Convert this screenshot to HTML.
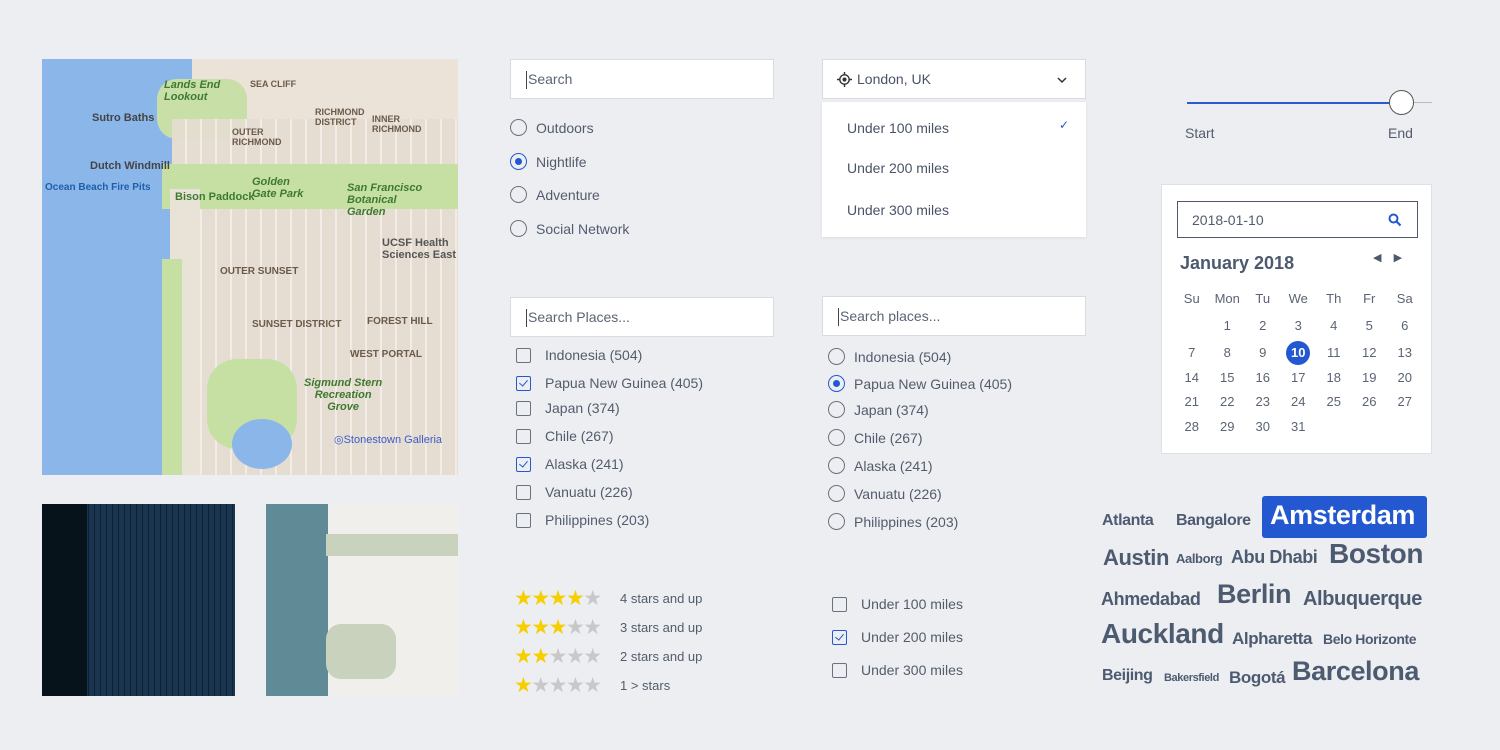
<!DOCTYPE html>
<html><head><style>
*{box-sizing:border-box;margin:0;padding:0}
body{width:1500px;height:750px;background:#edeef2;font-family:"Liberation Sans",sans-serif;color:#525c6c;position:relative;overflow:hidden}
.a{position:absolute}
.inp{position:absolute;background:#fff;border:1px solid #d8dbe0;height:40px;font-size:14px;padding:11px 0 0 14px;color:#5a6474}
.inp:before{content:"";position:absolute;left:15px;top:11px;width:1px;height:18px;background:#444}
.inp span{margin-left:3px}
.row{position:absolute;font-size:14px;display:flex;align-items:center;gap:9px;white-space:nowrap}
.rad{width:17px;height:17px;border:1.5px solid #6a7280;border-radius:50%;position:relative;background:transparent}
.rad.on{border-color:#2358d0}
.rad.on:after{content:"";position:absolute;left:3.5px;top:3.5px;width:7px;height:7px;border-radius:50%;background:#2358d0}
.cb{width:15px;height:15px;border:1.5px solid #6a7280;border-radius:2px;position:relative;margin-right:5px}
.cb.on{border-color:#2358d0}
.cb.on:after{content:"";position:absolute;left:4px;top:1px;width:4px;height:7px;border:solid #2358d0;border-width:0 1.5px 1.5px 0;transform:rotate(40deg)}
.st{font-size:21px;letter-spacing:-1.5px;color:#c8c8c8;width:100px}
.st b{color:#f5cf00;font-weight:normal}
.cal td{width:35.5px;text-align:center;font-size:13px;height:24.5px;color:#5a6474}
.tag{position:absolute;font-weight:bold;color:#4d5b70;white-space:nowrap;letter-spacing:-0.4px}
.m{position:absolute;font-size:9px;color:#6b5a4a;font-weight:bold;white-space:nowrap}
</style></head><body>

<!-- big map -->
<div class="a" style="left:42px;top:59px;width:416px;height:416px;background:#ebe3d8;overflow:hidden">
 <div class="a" style="left:0;top:0;width:130px;height:416px;background:#8ab6ea"></div>
 <div class="a" style="left:0;top:0;width:150px;height:70px;background:#8ab6ea"></div>
 <div class="a" style="left:115px;top:20px;width:90px;height:60px;background:#c8dfa8;border-radius:20px"></div>
 <div class="a" style="left:130px;top:60px;width:300px;height:360px;background:repeating-linear-gradient(90deg,#e6ddd2 0 13px,#f4eee8 13px 15px),#ebe3d8;opacity:.9"></div>
 <div class="a" style="left:120px;top:105px;width:300px;height:45px;background:#c6e0a4"></div>
 <div class="a" style="left:128px;top:130px;width:30px;height:290px;background:#e9e2d6"></div>
 <div class="a" style="left:165px;top:300px;width:90px;height:90px;background:#c6e0a4;border-radius:30px"></div>
 <div class="a" style="left:190px;top:360px;width:60px;height:50px;background:#8ab6ea;border-radius:50%"></div>
 <div class="a" style="left:120px;top:200px;width:20px;height:216px;background:#c6e0a4"></div>
 <div class="m" style="left:122px;top:20px;font-style:italic;font-size:11px;color:#3d7a2f">Lands End<br>Lookout</div>
 <div class="m" style="left:208px;top:20px">SEA CLIFF</div>
 <div class="m" style="left:50px;top:53px;font-size:11px;color:#444">Sutro Baths</div>
 <div class="m" style="left:190px;top:68px">OUTER<br>RICHMOND</div>
 <div class="m" style="left:273px;top:48px">RICHMOND<br>DISTRICT</div>
 <div class="m" style="left:330px;top:55px">INNER<br>RICHMOND</div>
 <div class="m" style="left:48px;top:101px;font-size:11px;color:#444">Dutch Windmill</div>
 <div class="m" style="left:3px;top:123px;font-size:10px;color:#1f5fa8">Ocean Beach Fire Pits</div>
 <div class="m" style="left:133px;top:132px;font-size:11px;color:#3d7a2f">Bison Paddock</div>
 <div class="m" style="left:210px;top:117px;font-size:11px;color:#3d7a2f;font-style:italic">Golden<br>Gate Park</div>
 <div class="m" style="left:305px;top:123px;font-size:11px;color:#3d7a2f;font-style:italic">San Francisco<br>Botanical<br>Garden</div>
 <div class="m" style="left:340px;top:178px;font-size:11px;color:#555">UCSF Health<br>Sciences East</div>
 <div class="m" style="left:178px;top:207px;font-size:10px">OUTER SUNSET</div>
 <div class="m" style="left:210px;top:260px;font-size:10px">SUNSET DISTRICT</div>
 <div class="m" style="left:325px;top:257px;font-size:10px">FOREST HILL</div>
 <div class="m" style="left:308px;top:290px;font-size:10px">WEST PORTAL</div>
 <div class="m" style="left:262px;top:318px;font-size:11px;color:#3d7a2f;font-style:italic;text-align:center">Sigmund Stern<br>Recreation<br>Grove</div>
 <div class="m" style="left:292px;top:374px;font-size:11px;color:#3b5bc9;font-weight:normal">◎Stonestown Galleria</div>
</div>
<!-- dark map -->
<div class="a" style="left:42px;top:504px;width:193px;height:192px;background:#0d1a24;overflow:hidden">
 <div class="a" style="left:35px;top:0;width:160px;height:192px;background:repeating-linear-gradient(90deg,#1a3550 0 5px,#0f2233 5px 6px)"></div>
 <div class="a" style="left:0;top:0;width:45px;height:192px;background:#07131b"></div>
</div>
<!-- light map -->
<div class="a" style="left:266px;top:504px;width:192px;height:192px;background:#f1efeb;overflow:hidden">
 <div class="a" style="left:0;top:0;width:62px;height:192px;background:#5f8a96"></div>
 <div class="a" style="left:60px;top:30px;width:132px;height:22px;background:#c9d2bd"></div>
 <div class="a" style="left:60px;top:120px;width:70px;height:55px;background:#c9d2bd;border-radius:15px"></div>
</div>

<!-- column 2 -->
<div class="inp" style="left:510px;top:59px;width:264px"><span>Search</span></div>
<div class="row" style="left:510px;top:119px"><div class="rad"></div>Outdoors</div>
<div class="row" style="left:510px;top:153px"><div class="rad on"></div>Nightlife</div>
<div class="row" style="left:510px;top:186px"><div class="rad"></div>Adventure</div>
<div class="row" style="left:510px;top:220px"><div class="rad"></div>Social Network</div>

<div class="inp" style="left:510px;top:297px;width:264px"><span>Search Places...</span></div>
<div class="row" style="left:516px;top:347px"><div class="cb"></div>Indonesia (504)</div>
<div class="row" style="left:516px;top:375px"><div class="cb on"></div>Papua New Guinea (405)</div>
<div class="row" style="left:516px;top:400px"><div class="cb"></div>Japan (374)</div>
<div class="row" style="left:516px;top:428px"><div class="cb"></div>Chile (267)</div>
<div class="row" style="left:516px;top:456px"><div class="cb on"></div>Alaska (241)</div>
<div class="row" style="left:516px;top:484px"><div class="cb"></div>Vanuatu (226)</div>
<div class="row" style="left:516px;top:512px"><div class="cb"></div>Philippines (203)</div>

<div class="row" style="left:514px;top:586px;font-size:13px;gap:6px"><span class="st"><b>★★★★</b>★</span>4 stars and up</div>
<div class="row" style="left:514px;top:615px;font-size:13px;gap:6px"><span class="st"><b>★★★</b>★★</span>3 stars and up</div>
<div class="row" style="left:514px;top:644px;font-size:13px;gap:6px"><span class="st"><b>★★</b>★★★</span>2 stars and up</div>
<div class="row" style="left:514px;top:673px;font-size:13px;gap:6px"><span class="st"><b>★</b>★★★★</span>1 &gt; stars</div>

<!-- column 3 -->
<div class="a" style="left:822px;top:59px;width:264px;height:40px;background:#fff;border:1px solid #d8dbe0;font-size:14px;padding:11px 0 0 34px;color:#4a5466">London, UK
 <svg class="a" style="left:14px;top:12px" width="15" height="15" viewBox="0 0 16 16"><circle cx="8" cy="8" r="5" fill="none" stroke="#333" stroke-width="1.5"/><circle cx="8" cy="8" r="2.2" fill="#333"/><path d="M8 0v3M8 13v3M0 8h3M13 8h3" stroke="#333" stroke-width="1.5"/></svg>
 <svg class="a" style="left:234px;top:16px" width="10" height="8" viewBox="0 0 10 8"><path d="M1 2l4 4 4-4" fill="none" stroke="#333" stroke-width="1.5"/></svg>
</div>
<div class="a" style="left:822px;top:102px;width:264px;height:135px;background:#fff;box-shadow:0 1px 3px rgba(0,0,0,.08);font-size:14px;color:#4a5466">
 <div class="a" style="left:25px;top:18px">Under 100 miles</div>
 <div class="a" style="left:237px;top:16px;color:#2358d0;font-size:12px">✓</div>
 <div class="a" style="left:25px;top:58px">Under 200 miles</div>
 <div class="a" style="left:25px;top:100px">Under 300 miles</div>
</div>
<div class="inp" style="left:822px;top:296px;width:264px"><span>Search places...</span></div>
<div class="row" style="left:828px;top:348px"><div class="rad"></div>Indonesia (504)</div>
<div class="row" style="left:828px;top:375px"><div class="rad on"></div>Papua New Guinea (405)</div>
<div class="row" style="left:828px;top:401px"><div class="rad"></div>Japan (374)</div>
<div class="row" style="left:828px;top:429px"><div class="rad"></div>Chile (267)</div>
<div class="row" style="left:828px;top:457px"><div class="rad"></div>Alaska (241)</div>
<div class="row" style="left:828px;top:485px"><div class="rad"></div>Vanuatu (226)</div>
<div class="row" style="left:828px;top:513px"><div class="rad"></div>Philippines (203)</div>
<div class="row" style="left:832px;top:596px"><div class="cb"></div>Under 100 miles</div>
<div class="row" style="left:832px;top:629px"><div class="cb on"></div>Under 200 miles</div>
<div class="row" style="left:832px;top:662px"><div class="cb"></div>Under 300 miles</div>

<!-- slider -->
<div class="a" style="left:1187px;top:102px;width:215px;height:2px;background:#2c5bd0"></div>
<div class="a" style="left:1402px;top:102px;width:30px;height:1px;background:#bbb"></div>
<div class="a" style="left:1389px;top:90px;width:25px;height:25px;border-radius:50%;background:#fff;border:1px solid #555"></div>
<div class="a" style="left:1185px;top:125px;font-size:14px">Start</div>
<div class="a" style="left:1388px;top:125px;font-size:14px">End</div>

<!-- calendar -->
<div class="a" style="left:1161px;top:184px;width:271px;height:270px;background:#fff;border:1px solid #dde0e4">
 <div class="a" style="left:15px;top:16px;width:241px;height:37px;border:1px solid #4e5a6c;font-size:14px;padding:10px 0 0 14px">2018-01-10
  <svg class="a" style="left:210px;top:11px" width="14" height="14" viewBox="0 0 14 14"><circle cx="5.5" cy="5.5" r="4" fill="none" stroke="#2358d0" stroke-width="2"/><path d="M8.5 8.5l4 4" stroke="#2358d0" stroke-width="2.2"/></svg>
 </div>
 <div class="a" style="left:18px;top:68px;font-size:18px;font-weight:bold;color:#4d5a6e">January 2018</div>
 <div class="a" style="left:211px;top:66px;font-size:11px;color:#4d5a6e">◀&nbsp;&nbsp;&nbsp;&nbsp;▶</div>
 <table class="cal a" style="left:12px;top:101px;border-collapse:collapse">
  <tr><td>Su</td><td>Mon</td><td>Tu</td><td>We</td><td>Th</td><td>Fr</td><td>Sa</td></tr>
  <tr style="height:30px"><td></td><td>1</td><td>2</td><td>3</td><td>4</td><td>5</td><td>6</td></tr>
  <tr><td>7</td><td>8</td><td>9</td><td><span style="display:inline-block;width:24px;height:24px;border-radius:50%;background:#2358d0;color:#fff;font-weight:bold;line-height:24px">10</span></td><td>11</td><td>12</td><td>13</td></tr>
  <tr><td>14</td><td>15</td><td>16</td><td>17</td><td>18</td><td>19</td><td>20</td></tr>
  <tr><td>21</td><td>22</td><td>23</td><td>24</td><td>25</td><td>26</td><td>27</td></tr>
  <tr><td>28</td><td>29</td><td>30</td><td>31</td><td></td><td></td><td></td></tr>
 </table>
</div>

<!-- tag cloud -->
<div class="a" style="left:1262px;top:496px;width:165px;height:42px;background:#2358d0;border-radius:3px"></div>
<div class="tag" style="left:1102px;top:512px;font-size:16px">Atlanta</div>
<div class="tag" style="left:1176px;top:512px;font-size:16px">Bangalore</div>
<div class="tag" style="left:1270px;top:500px;font-size:27px;color:#fff">Amsterdam</div>
<div class="tag" style="left:1103px;top:545px;font-size:22px">Austin</div>
<div class="tag" style="left:1176px;top:551px;font-size:13px">Aalborg</div>
<div class="tag" style="left:1231px;top:547px;font-size:18px">Abu Dhabi</div>
<div class="tag" style="left:1329px;top:538px;font-size:28px">Boston</div>
<div class="tag" style="left:1101px;top:589px;font-size:18px">Ahmedabad</div>
<div class="tag" style="left:1217px;top:579px;font-size:27px">Berlin</div>
<div class="tag" style="left:1303px;top:588px;font-size:20px">Albuquerque</div>
<div class="tag" style="left:1101px;top:618px;font-size:28px">Auckland</div>
<div class="tag" style="left:1232px;top:629px;font-size:17px">Alpharetta</div>
<div class="tag" style="left:1323px;top:631px;font-size:14px">Belo Horizonte</div>
<div class="tag" style="left:1102px;top:667px;font-size:16px">Beijing</div>
<div class="tag" style="left:1164px;top:672px;font-size:11px">Bakersfield</div>
<div class="tag" style="left:1229px;top:668px;font-size:17px">Bogotá</div>
<div class="tag" style="left:1292px;top:656px;font-size:27px">Barcelona</div>
</body></html>
